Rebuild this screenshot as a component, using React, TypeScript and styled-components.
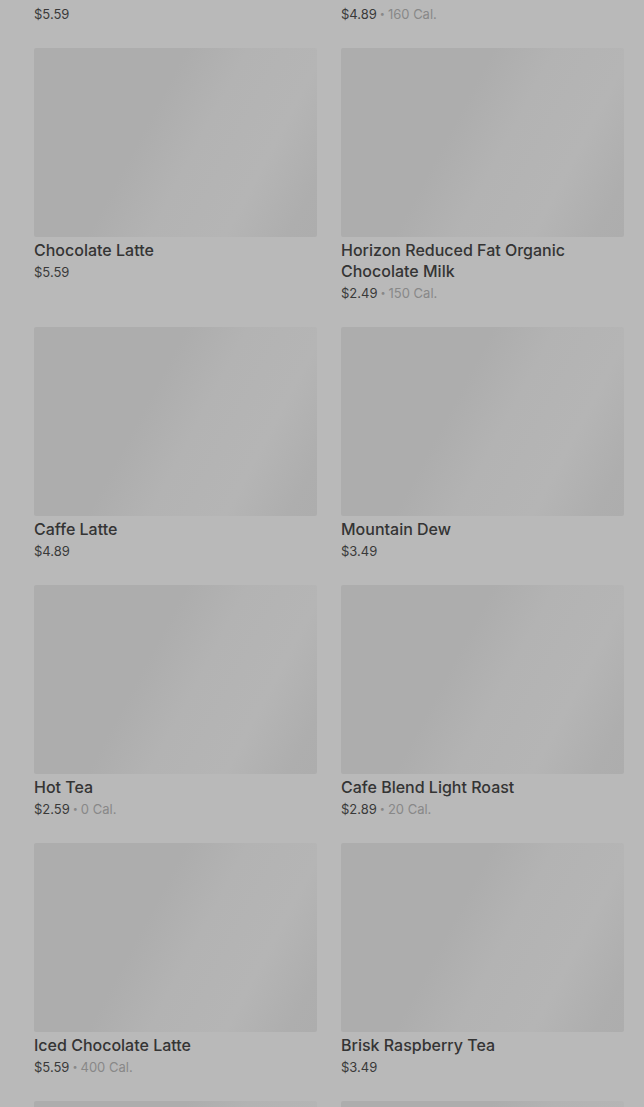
import React from "react";
import styled, { createGlobalStyle } from "styled-components";

const Global = createGlobalStyle`
  html, body {
    margin: 0;
    padding: 0;
    background: #b9b9b9;
    overflow: hidden;
  }
  body {
    font-family: Inter, "Noto Sans", "Liberation Sans", sans-serif;
    -webkit-font-smoothing: antialiased;
  }
`;

const Page = styled.main`
  width: 644px;
  height: 1107px;
  overflow: hidden;
  background: #b9b9b9;
`;

const Grid = styled.div`
  display: grid;
  grid-template-columns: 283px 283px;
  column-gap: 24px;
  row-gap: 25px;
  align-items: start;
  padding-left: 34px;
  margin-top: -210px;
`;

const Card = styled.article`
  display: flex;
  flex-direction: column;
`;

const Thumb = styled.div`
  width: 100%;
  height: 189px;
  border-radius: 2px;
  background: linear-gradient(
    118deg,
    #adadad 0%,
    #adadad 40%,
    #b3b3b3 56%,
    #b5b5b5 76%,
    #aeaeae 92%,
    #adadad 100%
  );
`;

const Title = styled.h3`
  margin: 3px 0 0;
  font-size: 16px;
  line-height: 21px;
  font-weight: 500;
  color: #343434;
  letter-spacing: 0;
`;

const Meta = styled.div`
  margin-top: 2px;
  font-size: 13px;
  line-height: 18px;
  color: #393939;
  display: flex;
  align-items: center;
`;

const Cal = styled.span`
  color: #888888;
`;

const Dot = styled.span`
  color: #888888;
  margin: 0 3px;
  font-size: 9px;
`;

type Item = { name: string; price: string; cal?: string };

const items: Item[] = [
  { name: "Iced Caramel Macchiato", price: "$5.59" },
  { name: "Cold Brew Coffee", price: "$4.89", cal: "160 Cal." },
  { name: "Chocolate Latte", price: "$5.59" },
  { name: "Horizon Reduced Fat Organic Chocolate Milk", price: "$2.49", cal: "150 Cal." },
  { name: "Caffe Latte", price: "$4.89" },
  { name: "Mountain Dew", price: "$3.49" },
  { name: "Hot Tea", price: "$2.59", cal: "0 Cal." },
  { name: "Cafe Blend Light Roast", price: "$2.89", cal: "20 Cal." },
  { name: "Iced Chocolate Latte", price: "$5.59", cal: "400 Cal." },
  { name: "Brisk Raspberry Tea", price: "$3.49" },
  { name: "Iced Coffee", price: "$3.29" },
  { name: "Vanilla Latte", price: "$5.19" },
];

export default function App() {
  return (
    <Page>
      <Global />
      <Grid>
        {items.map((it, i) => (
          <Card key={i}>
            <Thumb />
            <Title>{it.name}</Title>
            <Meta>
              <span>{it.price}</span>
              {it.cal && (
                <>
                  <Dot>•</Dot>
                  <Cal>{it.cal}</Cal>
                </>
              )}
            </Meta>
          </Card>
        ))}
      </Grid>
    </Page>
  );
}
